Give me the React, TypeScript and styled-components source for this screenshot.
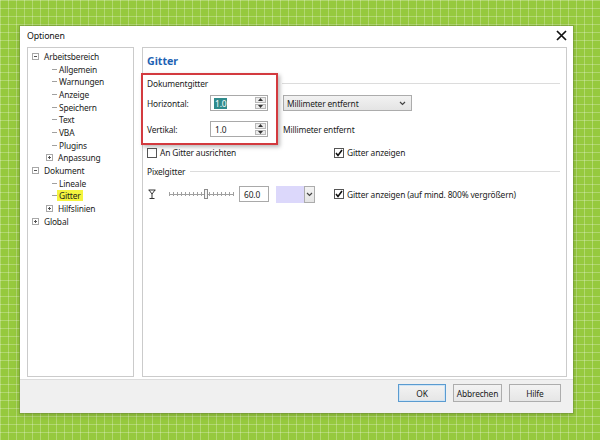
import styled, { createGlobalStyle } from "styled-components";

const GlobalStyle = createGlobalStyle`
  html, body {
    margin: 0;
    padding: 0;
  }
  body {
    width: 600px;
    height: 440px;
    overflow: hidden;
    font-family: "Noto Sans", "Open Sans", sans-serif;
    font-size: 8.4px;
    letter-spacing: -0.15px;
    color: #1b1b1b;
  }
`;

/*----------------------------------
	Desktop + window
----------------------------------*/
const Desktop = styled.div`
  width: 600px;
  height: 440px;
  box-sizing: border-box;
  padding: 26px 0 0 20px;
  background-color: #96c93e;
  background-image: linear-gradient(
      rgba(255, 255, 255, 0.26) 1px,
      transparent 1px
    ),
    linear-gradient(90deg, rgba(255, 255, 255, 0.26) 1px, transparent 1px);
  background-size: 8px 8px;
`;

const Dialog = styled.div`
  width: 553px;
  height: 387px;
  background: #ffffff;
  box-shadow: 0 0 0 1px rgba(110, 140, 60, 0.45), 0 2px 6px rgba(0, 0, 0, 0.18);
  display: flex;
  flex-direction: column;
`;

const TitleBar = styled.div`
  height: 21px;
  display: flex;
  align-items: center;
  justify-content: space-between;
  padding: 0 5px 0 7px;
`;

const Title = styled.span`
  font-size: 8.8px;
  color: #111;
  margin-top: -2px;
`;

const CloseButton = styled.div`
  width: 14px;
  height: 14px;
  display: flex;
  align-items: center;
  justify-content: center;
  margin-top: -3px;
`;

const Body = styled.div`
  display: flex;
  gap: 8px;
  padding: 0 6px 0 7px;
  height: 330px;
`;

const Footer = styled.div`
  margin-top: 2px;
  flex: 1;
  background: #f0f0f0;
  border-top: 1px solid #dcdcdc;
  display: flex;
  justify-content: flex-end;
  align-items: flex-start;
  gap: 7px;
  padding: 4px 12px 0 0;
`;

const Button = styled.button<{ $primary?: boolean; $w: number }>`
  width: ${(p) => p.$w}px;
  height: 18px;
  padding: 0;
  font-family: inherit;
  font-size: 8.4px;
  letter-spacing: -0.15px;
  color: #1b1b1b;
  background: linear-gradient(#f3f3f3, #e6e6e6);
  border: 1px solid ${(p) => (p.$primary ? "#5a9bd0" : "#adadad")};
  box-shadow: ${(p) => (p.$primary ? "inset 0 0 0 1px #cfe4f5" : "none")};
`;

/*----------------------------------
	Tree
----------------------------------*/
const TreePanel = styled.div`
  width: 107px;
  box-sizing: border-box;
  border: 1px solid #cbcbcb;
  padding-top: 2px;
`;

const TreeRow = styled.div<{ $indent: number }>`
  height: 12.7px;
  display: flex;
  align-items: center;
  padding-left: ${(p) => p.$indent}px;
`;

const Expander = styled.span`
  width: 7px;
  height: 7px;
  box-sizing: border-box;
  border: 1px solid #a8a8a8;
  margin-right: 5px;
  display: flex;
  align-items: center;
  justify-content: center;
  position: relative;
  &::before {
    content: "";
    width: 3px;
    height: 1px;
    background: #555;
  }
`;

const PlusExpander = styled(Expander)`
  &::after {
    content: "";
    position: absolute;
    width: 1px;
    height: 3px;
    background: #555;
  }
`;

const Dash = styled.span`
  width: 5px;
  border-top: 1px solid #a0a0a0;
  margin-right: 2px;
`;

const TreeLabel = styled.span<{ $selected?: boolean }>`
  padding: 1px 2px;
  margin-left: -2px;
  background: ${(p) => (p.$selected ? "#f4f43e" : "transparent")};
  line-height: 9px;
`;

/*----------------------------------
	Settings page
----------------------------------*/
const Page = styled.div`
  flex: 1;
  box-sizing: border-box;
  border: 1px solid #cbcbcb;
  padding: 0 6px 0 4px;
  position: relative;
  display: flex;
  flex-direction: column;
`;

const Heading = styled.div`
  margin-top: 6px;
  height: 14px;
  line-height: 14px;
  font-size: 10.6px;
  letter-spacing: 0;
  font-weight: bold;
  color: #1d62b3;
`;

const GroupHeader = styled.div<{ $top: number; $ruleFrom: number }>`
  margin-top: ${(p) => p.$top}px;
  height: 12px;
  display: flex;
  align-items: center;
  &::after {
    content: "";
    flex: 1;
    height: 1px;
    background: #dcdcdc;
    margin-left: ${(p) => p.$ruleFrom}px;
  }
`;

const FormGrid = styled.div`
  margin-top: 6px;
  display: grid;
  grid-template-columns: 63px 73px 129px;
  row-gap: 10px;
  align-items: center;
`;

const SpinBox = styled.div`
  width: 58px;
  height: 16px;
  box-sizing: border-box;
  border: 1px solid #a9a9a9;
  background: #fff;
  display: flex;
  align-items: center;
  padding: 0 1px 0 3px;
`;

const SpinValue = styled.span<{ $selected?: boolean }>`
  flex: 1;
  display: flex;
  & > span {
    background: ${(p) => (p.$selected ? "#2f8b8c" : "transparent")};
    color: ${(p) => (p.$selected ? "#fff" : "#1b1b1b")};
    padding: 0 1px;
    line-height: 11px;
  }
`;

const SpinButtons = styled.div`
  width: 11px;
  height: 12px;
  display: flex;
  flex-direction: column;
  gap: 1px;
`;

const SpinButton = styled.div`
  flex: 1;
  background: #ececec;
  border: 1px solid #b8b8b8;
  display: flex;
  align-items: center;
  justify-content: center;
`;

const Select = styled.div`
  height: 16px;
  box-sizing: border-box;
  border: 1px solid #acacac;
  background: linear-gradient(#f2f2f2, #e4e4e4);
  display: flex;
  align-items: center;
  justify-content: space-between;
  padding: 0 5px 0 3px;
`;

const CheckRow = styled.div<{ $top: number }>`
  margin-top: ${(p) => p.$top}px;
  display: grid;
  grid-template-columns: 187px 1fr;
  align-items: center;
`;

const CheckLabel = styled.label`
  display: flex;
  align-items: center;
  gap: 3px;
`;

const Box = styled.span`
  width: 10px;
  height: 10px;
  box-sizing: border-box;
  border: 1px solid #555;
  background: #fff;
  display: flex;
  align-items: center;
  justify-content: center;
`;

const PixelControls = styled.div`
  display: flex;
  align-items: center;
  height: 16px;
`;

const PixelIcon = styled.div`
  width: 9px;
  display: flex;
  margin: 0 12px 0 1px;
`;

const Slider = styled.div`
  width: 65px;
  height: 10px;
  position: relative;
  margin-right: 5px;
  background-image: linear-gradient(#a0a0a0, #a0a0a0),
    repeating-linear-gradient(90deg, #a0a0a0 0 1px, transparent 1px 4px);
  background-size: 100% 1px, 100% 4px;
  background-position: 0 5px, 0 3px;
  background-repeat: no-repeat;
`;

const Thumb = styled.div`
  position: absolute;
  left: 35px;
  top: 0;
  width: 4px;
  height: 10px;
  box-sizing: border-box;
  border: 1px solid #8c8c8c;
  background: #f4f4f4;
`;

const NumberField = styled.div`
  width: 30px;
  height: 16px;
  box-sizing: border-box;
  border: 1px solid #a9a9a9;
  padding-left: 4px;
  display: flex;
  align-items: center;
  margin-right: 7px;
`;

const ColorPicker = styled.div`
  display: flex;
  height: 17px;
`;

const Swatch = styled.div`
  width: 28px;
  background: #dcd8fb;
`;

const SwatchArrow = styled.div`
  width: 11px;
  box-sizing: border-box;
  border: 1px solid #acacac;
  background: linear-gradient(#f3f3f3, #e4e4e4);
  display: flex;
  align-items: center;
  justify-content: center;
`;

const Annotation = styled.div`
  position: absolute;
  left: -2px;
  top: 25px;
  width: 137px;
  height: 72px;
  box-sizing: border-box;
  border: 2px solid #d33a3f;
  box-shadow: 2px 2px 4px rgba(0, 0, 0, 0.28);
  pointer-events: none;
`;

/*----------------------------------
	Small drawings
----------------------------------*/
const Chevron = () => (
  <svg width="7" height="5" viewBox="0 0 7 5">
    <path d="M1 1 L3.5 3.5 L6 1" fill="none" stroke="#444" strokeWidth="1.2" />
  </svg>
);

const Tick = () => (
  <svg width="8" height="8" viewBox="0 0 8 8">
    <path d="M1 4 L3 6.5 L7 1" fill="none" stroke="#111" strokeWidth="1.6" />
  </svg>
);

const Arrow = ({ up }: { up?: boolean }) => (
  <svg width="5" height="3" viewBox="0 0 5 3">
    <path d={up ? "M0 3 L2.5 0 L5 3 Z" : "M0 0 L2.5 3 L5 0 Z"} fill="#333" />
  </svg>
);

const Check = ({ on, children }: { on?: boolean; children: string }) => (
  <CheckLabel>
    <Box>{on && <Tick />}</Box>
    {children}
  </CheckLabel>
);

const Spin = ({ value, selected }: { value: string; selected?: boolean }) => (
  <SpinBox>
    <SpinValue $selected={selected}>
      <span>{value}</span>
    </SpinValue>
    <SpinButtons>
      <SpinButton>
        <Arrow up />
      </SpinButton>
      <SpinButton>
        <Arrow />
      </SpinButton>
    </SpinButtons>
  </SpinBox>
);

type Node = {
  label: string;
  level: 0 | 1;
  kind: "open" | "closed" | "leaf";
  selected?: boolean;
};

const tree: Node[] = [
  { label: "Arbeitsbereich", level: 0, kind: "open" },
  { label: "Allgemein", level: 1, kind: "leaf" },
  { label: "Warnungen", level: 1, kind: "leaf" },
  { label: "Anzeige", level: 1, kind: "leaf" },
  { label: "Speichern", level: 1, kind: "leaf" },
  { label: "Text", level: 1, kind: "leaf" },
  { label: "VBA", level: 1, kind: "leaf" },
  { label: "Plugins", level: 1, kind: "leaf" },
  { label: "Anpassung", level: 1, kind: "closed" },
  { label: "Dokument", level: 0, kind: "open" },
  { label: "Lineale", level: 1, kind: "leaf" },
  { label: "Gitter", level: 1, kind: "leaf", selected: true },
  { label: "Hilfslinien", level: 1, kind: "closed" },
  { label: "Global", level: 0, kind: "closed" },
];

const indentFor = (n: Node) => {
  if (n.level === 0) return 4;
  return n.kind === "leaf" ? 24 : 18;
};

const App = () => {
  return (
    <Desktop>
      <GlobalStyle />
      <Dialog>
        <TitleBar>
          <Title>Optionen</Title>
          <CloseButton>
            <svg width="11" height="11" viewBox="0 0 11 11">
              <path
                d="M1 1 L10 10 M10 1 L1 10"
                stroke="#111"
                strokeWidth="1.7"
              />
            </svg>
          </CloseButton>
        </TitleBar>

        <Body>
          <TreePanel>
            {tree.map((n) => (
              <TreeRow key={n.label} $indent={indentFor(n)}>
                {n.kind === "open" && <Expander />}
                {n.kind === "closed" && <PlusExpander />}
                {n.kind === "leaf" && <Dash />}
                <TreeLabel $selected={n.selected}>{n.label}</TreeLabel>
              </TreeRow>
            ))}
          </TreePanel>

          <Page>
            <Heading>Gitter</Heading>

            <GroupHeader $top={9} $ruleFrom={74}>
              Dokumentgitter
            </GroupHeader>
            <FormGrid>
              <span>Horizontal:</span>
              <Spin value="1.0" selected />
              <Select>
                <span>Millimeter entfernt</span>
                <Chevron />
              </Select>
              <span>Vertikal:</span>
              <Spin value="1.0" />
              <span>Millimeter entfernt</span>
            </FormGrid>

            <CheckRow $top={10}>
              <Check>An Gitter ausrichten</Check>
              <Check on>Gitter anzeigen</Check>
            </CheckRow>

            <GroupHeader $top={7} $ruleFrom={5}>
              Pixelgitter
            </GroupHeader>

            <CheckRow $top={9}>
              <PixelControls>
                <PixelIcon>
                  <svg width="8" height="10" viewBox="0 0 8 10">
                    <path
                      d="M0.5 1 H7.5 M1 1 L4 5 L7 1 M4 5 V9 M1.5 9.5 H6.5"
                      fill="none"
                      stroke="#333"
                      strokeWidth="1"
                    />
                  </svg>
                </PixelIcon>
                <Slider>
                  <Thumb />
                </Slider>
                <NumberField>60.0</NumberField>
                <ColorPicker>
                  <Swatch />
                  <SwatchArrow>
                    <Chevron />
                  </SwatchArrow>
                </ColorPicker>
              </PixelControls>
              <Check on>Gitter anzeigen (auf mind. 800% vergrößern)</Check>
            </CheckRow>

            <Annotation />
          </Page>
        </Body>

        <Footer>
          <Button $primary $w={48}>
            OK
          </Button>
          <Button $w={49}>Abbrechen</Button>
          <Button $w={52}>Hilfe</Button>
        </Footer>
      </Dialog>
    </Desktop>
  );
};

export default App;
